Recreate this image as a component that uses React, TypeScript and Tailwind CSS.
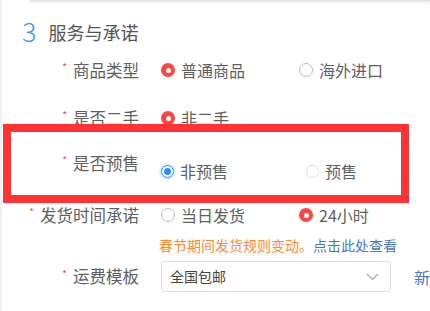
import React from "react";

const font = { fontFamily: '"Noto Sans CJK SC", "Noto Sans", sans-serif' };

function RedRadio() {
  return (
    <span className="flex h-[14px] w-[14px] items-center justify-center rounded-full bg-[#ff4444]">
      <span className="h-[5px] w-[5px] rounded-full bg-white" />
    </span>
  );
}
function EmptyRadio({ size = 14 }: { size?: number }) {
  return (
    <span
      className={
        size === 14
          ? "block h-[14px] w-[14px] rounded-full border border-[#bbb] bg-white"
          : "block h-[13px] w-[13px] rounded-full border border-[#ddd] bg-white"
      }
    />
  );
}
function BlueRadio() {
  return (
    <span className="flex h-[13px] w-[13px] items-center justify-center rounded-full border border-[#2d8cf0] bg-white shadow-[0_0_0_2px_rgba(45,140,240,0.15)]">
      <span className="h-[7px] w-[7px] rounded-full bg-[#2d8cf0]" />
    </span>
  );
}

function Label({ text }: { text: string }) {
  return (
    <div className="flex h-[24px] w-[137px] shrink-0 items-center justify-end text-[16.5px] text-[#5f5f5f]">
      <span className="mr-[6px] self-start pt-[4px] text-[10px] leading-[10px] text-[#ff3b3b]">*</span>
      <span>{text}</span>
    </div>
  );
}

function Option({ radio, text, w }: { radio: React.ReactNode; text: string; w: string }) {
  return (
    <div className={"flex items-center gap-[6px] " + w}>
      {radio}
      <span className="text-[16px] text-[#5f5f5f]">{text}</span>
    </div>
  );
}

export default function App() {
  return (
    <div className="relative h-[311px] w-[430px] overflow-hidden border-l-2 border-[#f2f2f2] bg-white" style={font}>
      <div className="ml-[28px] h-[1px] bg-[#e2e2e2] shadow-[0_1px_3px_rgba(0,0,0,0.25)]" />
      <div className="mt-[15px] flex h-[30px] items-center">
        <span className="ml-[20px] text-[27px] font-light leading-[30px] text-[#3a9ae8]">3</span>
        <span className="ml-[12px] mt-[3px] text-[18px] text-[#555]">服务与承诺</span>
      </div>

      <div className="mt-[12px] flex h-[24px] items-center">
        <Label text="商品类型" />
        <div className="ml-[22px] flex">
          <Option radio={<RedRadio />} text="普通商品" w="w-[138px]" />
          <Option radio={<EmptyRadio />} text="海外进口" w="" />
        </div>
      </div>

      <div className="mt-[24px] flex h-[24px] items-center">
        <Label text="是否二手" />
        <div className="ml-[22px] flex">
          <Option radio={<RedRadio />} text="非二手" w="" />
        </div>
      </div>

      <div className="mt-[21px] flex items-start">
        <Label text="是否预售" />
        <div className="ml-[22px] mt-[8px] flex h-[24px] items-center">
          <Option radio={<BlueRadio />} text="非预售" w="w-[145px]" />
          <Option radio={<EmptyRadio size={13} />} text="预售" w="" />
        </div>
      </div>

      <div className="mt-[20px] flex h-[24px] items-center">
        <Label text="发货时间承诺" />
        <div className="ml-[22px] flex">
          <Option radio={<EmptyRadio />} text="当日发货" w="w-[138px]" />
          <Option radio={<RedRadio />} text="24小时" w="" />
        </div>
      </div>

      <div className="ml-[157px] mt-[9px] h-[18px] text-[14px] leading-[18px]">
        <span className="text-[#ff8a33]">春节期间发货规则变动。</span>
        <span className="text-[#4a78b8]">点击此处查看</span>
      </div>

      <div className="mt-[7px] flex items-center">
        <Label text="运费模板" />
        <div className="ml-[22px] flex h-[31px] w-[230px] items-center justify-between rounded-[3px] border border-[#dcdcdc] px-[8px]">
          <span className="text-[14px] text-[#444]">全国包邮</span>
          <svg width="13" height="8" viewBox="0 0 13 8" className="mr-[3px]">
            <path d="M1 1 L6.5 6.5 L12 1" fill="none" stroke="#aaa" strokeWidth="1.2" />
          </svg>
        </div>
        <span className="ml-[23px] text-[16px] text-[#4a78b8]">新</span>
      </div>

      <div className="pointer-events-none absolute left-[1px] top-[124px] h-[79px] w-[406px] border-[8px] border-[#ff3333]" />
    </div>
  );
}
